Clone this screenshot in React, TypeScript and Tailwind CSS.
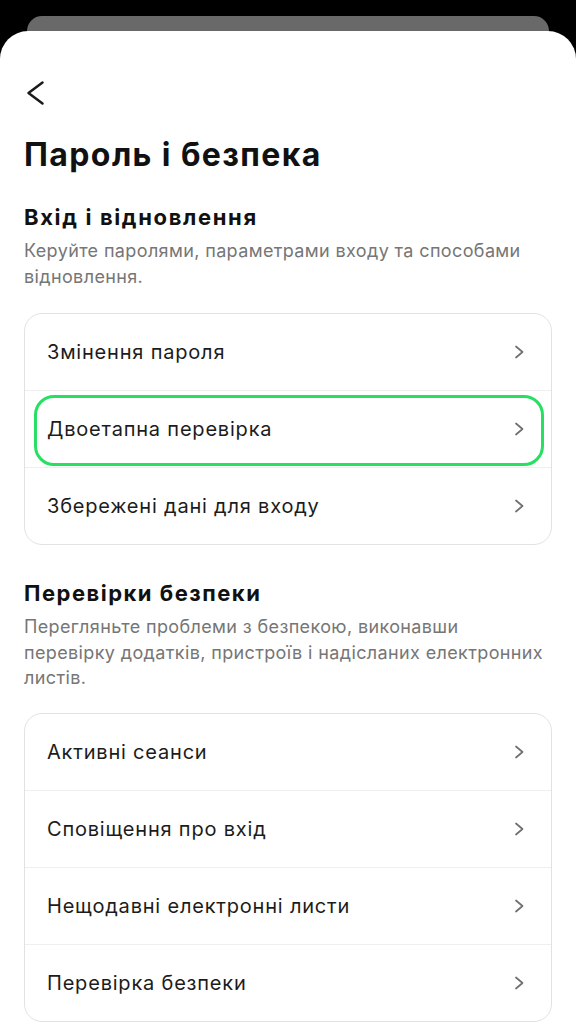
import React from "react";

const Chevron = () => (
  <svg width="12" height="14" viewBox="0 0 12 14" fill="none" className="shrink-0">
    <path d="M3 1.5 L9.5 7 L3 12.5" stroke="#6f6f6f" strokeWidth="1.7" strokeLinecap="round" strokeLinejoin="round" />
  </svg>
);

type RowProps = { label: string; first?: boolean; highlight?: boolean };

const Row = ({ label, first, highlight }: RowProps) => (
  <div
    className={`relative flex items-center justify-between pl-[22px] pr-[26px] ${
      first ? "h-[76px]" : "h-[77px] border-t border-[#efefef]"
    }`}
  >
    <span className="text-[20px] leading-[24px] tracking-[0.8px] text-[#1c1c1c]">{label}</span>
    <Chevron />
    {highlight && (
      <div className="pointer-events-none absolute left-[9px] right-[7px] top-[4px] bottom-[1px] rounded-[20px] border-[3px] border-[#27e062]" />
    )}
  </div>
);

const Card = ({ items, highlightIndex }: { items: string[]; highlightIndex?: number }) => (
  <div className="rounded-[18px] border border-[#e2e2e2] bg-white">
    {items.map((it, i) => (
      <Row key={it} label={it} first={i === 0} highlight={i === highlightIndex} />
    ))}
  </div>
);

const Desc = ({ lines }: { lines: string[] }) => (
  <p className="mt-[7px] text-[18px] leading-[25.5px] tracking-[0.37px] text-[#767676]">
    {lines.map((l) => (
      <span key={l} className="block whitespace-nowrap">
        {l}
      </span>
    ))}
  </p>
);

export default function App() {
  return (
    <div className="min-h-[1024px] bg-black pt-4" style={{ fontFamily: "Inter, 'Noto Sans', sans-serif" }}>
      <div className="mx-[27px] h-[15px] rounded-t-[16px] bg-[#696969]" />
      <div className="min-h-[993px] rounded-t-[28px] bg-white px-6 pt-[49px]">
        <svg width="22" height="26" viewBox="0 0 22 26" fill="none" className="block">
          <path d="M18.5 2.5 L4.5 13 L18.5 23.5" stroke="#1a1a1a" strokeWidth="2.5" strokeLinecap="round" strokeLinejoin="round" />
        </svg>
        <h1 className="mt-[29px] text-[32px] font-bold leading-[40px] tracking-[1.4px] text-[#111111]">Пароль і безпека</h1>

        <h2 className="mt-[28px] text-[22px] font-bold leading-[28px] tracking-[1.65px] text-[#111111]">Вхід і відновлення</h2>
        <Desc lines={["Керуйте паролями, параметрами входу та способами", "відновлення."]} />
        <div className="mt-[24px]">
          <Card items={["Змінення пароля", "Двоетапна перевірка", "Збережені дані для входу"]} highlightIndex={1} />
        </div>

        <h2 className="mt-[34px] text-[22px] font-bold leading-[28px] tracking-[1.5px] text-[#111111]">Перевірки безпеки</h2>
        <Desc
          lines={[
            "Перегляньте проблеми з безпекою, виконавши",
            "перевірку додатків, пристроїв і надісланих електронних",
            "листів.",
          ]}
        />
        <div className="mt-[22px]">
          <Card items={["Активні сеанси", "Сповіщення про вхід", "Нещодавні електронні листи", "Перевірка безпеки"]} />
        </div>
      </div>
    </div>
  );
}
